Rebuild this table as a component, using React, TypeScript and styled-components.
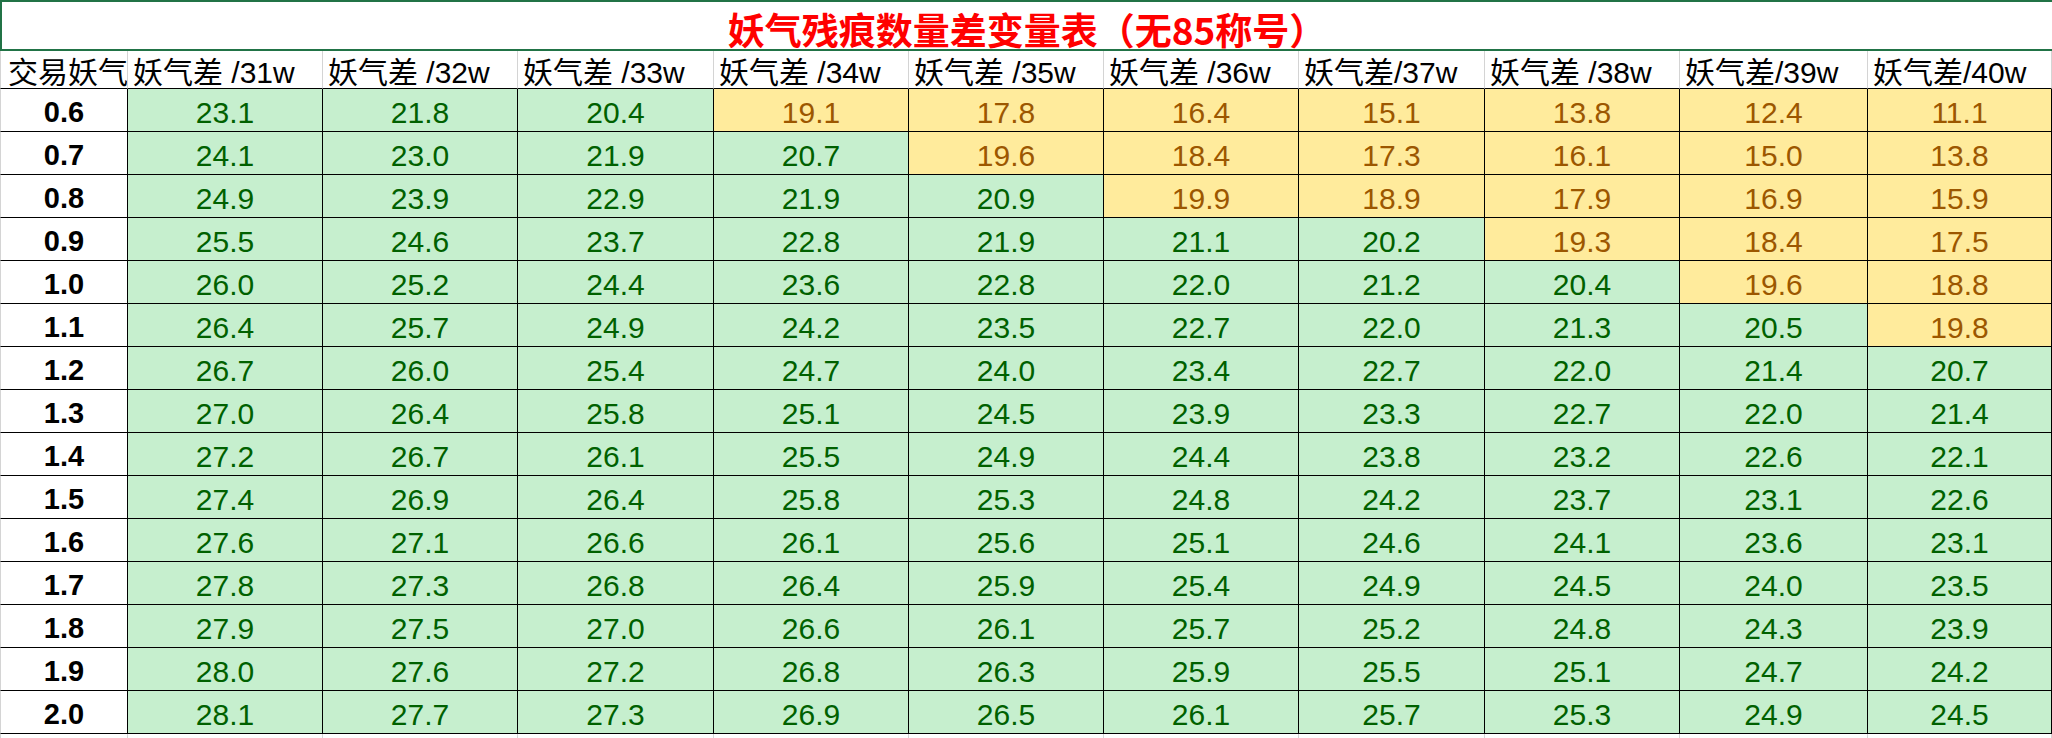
import React from "react";
import styled, { createGlobalStyle, css } from "styled-components";

//Global
const GlobalStyle = createGlobalStyle`
  body {
    margin: 0;
    background: #ffffff;
  }
`;

//Styled-components
const Sheet = styled.div`
  width: 2052px;
  height: 738px;
  overflow: hidden;
  background: #ffffff;
  font-family: "Liberation Sans", "Noto Sans CJK SC", sans-serif;
`;

const TitleRow = styled.div`
  display: flex;
  justify-content: center;
  align-items: center;
  box-sizing: border-box;
  height: 51px;
  padding-top: 6px;

  border-top: 2px solid #217346;
  border-left: 2px solid #217346;
  border-bottom: 2px solid #217346;

  color: #ff0000;
  font-family: "Noto Sans CJK SC", sans-serif;
  font-size: 37px;
  font-weight: 700;
`;

const Grid = styled.div`
  display: grid;
  grid-template-columns: 128px 195px 195px 196px 195px 195px 195px 186px 195px 188px 184px;
  grid-template-rows: 38px repeat(15, 43px) 8px;
`;

const Cell = styled.div`
  display: flex;
  align-items: center;
  box-sizing: border-box;
  overflow: hidden;
  white-space: nowrap;
  border-right: 1px solid #000000;
  border-bottom: 1px solid #000000;
`;

const HeaderCell = styled(Cell)<{ $first?: boolean }>`
  padding-left: ${(p) => (p.$first ? "7px" : "5px")};
  border-right-color: #d4d4d4;
  border-left: ${(p) => (p.$first ? "1px solid #d4d4d4" : "none")};
  color: #000000;
  font-size: 30px;
`;

const RowLabel = styled(Cell)`
  justify-content: center;
  padding-top: 4px;
  border-left: 1px solid #d4d4d4;
  font-size: 29px;
  font-weight: 700;
  color: #000000;
`;

const ValueCell = styled(Cell)<{ $low: boolean }>`
  justify-content: center;
  padding-top: 5px;
  font-size: 30px;

  ${(p) =>
    p.$low
      ? css`
          background: #ffeb9c;
          color: #9c5700;
        `
      : css`
          background: #c6efce;
          color: #006100;
        `}
`;

const Filler = styled.div<{ $first?: boolean }>`
  box-sizing: border-box;
  border-right: 1px solid #d4d4d4;
  border-left: ${(p) => (p.$first ? "1px solid #d4d4d4" : "none")};
`;

//Data
const headers = [
  "妖气差 /31w",
  "妖气差 /32w",
  "妖气差 /33w",
  "妖气差 /34w",
  "妖气差 /35w",
  "妖气差 /36w",
  "妖气差/37w",
  "妖气差 /38w",
  "妖气差/39w",
  "妖气差/40w",
];

const rows: [string, string[]][] = [
  ["0.6", ["23.1", "21.8", "20.4", "19.1", "17.8", "16.4", "15.1", "13.8", "12.4", "11.1"]],
  ["0.7", ["24.1", "23.0", "21.9", "20.7", "19.6", "18.4", "17.3", "16.1", "15.0", "13.8"]],
  ["0.8", ["24.9", "23.9", "22.9", "21.9", "20.9", "19.9", "18.9", "17.9", "16.9", "15.9"]],
  ["0.9", ["25.5", "24.6", "23.7", "22.8", "21.9", "21.1", "20.2", "19.3", "18.4", "17.5"]],
  ["1.0", ["26.0", "25.2", "24.4", "23.6", "22.8", "22.0", "21.2", "20.4", "19.6", "18.8"]],
  ["1.1", ["26.4", "25.7", "24.9", "24.2", "23.5", "22.7", "22.0", "21.3", "20.5", "19.8"]],
  ["1.2", ["26.7", "26.0", "25.4", "24.7", "24.0", "23.4", "22.7", "22.0", "21.4", "20.7"]],
  ["1.3", ["27.0", "26.4", "25.8", "25.1", "24.5", "23.9", "23.3", "22.7", "22.0", "21.4"]],
  ["1.4", ["27.2", "26.7", "26.1", "25.5", "24.9", "24.4", "23.8", "23.2", "22.6", "22.1"]],
  ["1.5", ["27.4", "26.9", "26.4", "25.8", "25.3", "24.8", "24.2", "23.7", "23.1", "22.6"]],
  ["1.6", ["27.6", "27.1", "26.6", "26.1", "25.6", "25.1", "24.6", "24.1", "23.6", "23.1"]],
  ["1.7", ["27.8", "27.3", "26.8", "26.4", "25.9", "25.4", "24.9", "24.5", "24.0", "23.5"]],
  ["1.8", ["27.9", "27.5", "27.0", "26.6", "26.1", "25.7", "25.2", "24.8", "24.3", "23.9"]],
  ["1.9", ["28.0", "27.6", "27.2", "26.8", "26.3", "25.9", "25.5", "25.1", "24.7", "24.2"]],
  ["2.0", ["28.1", "27.7", "27.3", "26.9", "26.5", "26.1", "25.7", "25.3", "24.9", "24.5"]],
];

//Component
const App = () => {
  return (
    <Sheet>
      <GlobalStyle />
      <TitleRow>妖气残痕数量差变量表（无85称号）</TitleRow>
      <Grid>
        <HeaderCell $first>交易妖气</HeaderCell>
        {headers.map((h) => (
          <HeaderCell key={h}>{h}</HeaderCell>
        ))}

        {rows.map(([label, values]) => (
          <React.Fragment key={label}>
            <RowLabel>{label}</RowLabel>
            {values.map((v, i) => (
              <ValueCell key={i} $low={parseFloat(v) < 20}>
                {v}
              </ValueCell>
            ))}
          </React.Fragment>
        ))}

        <Filler $first />
        {headers.map((h) => (
          <Filler key={h} />
        ))}
      </Grid>
    </Sheet>
  );
};

export default App;
